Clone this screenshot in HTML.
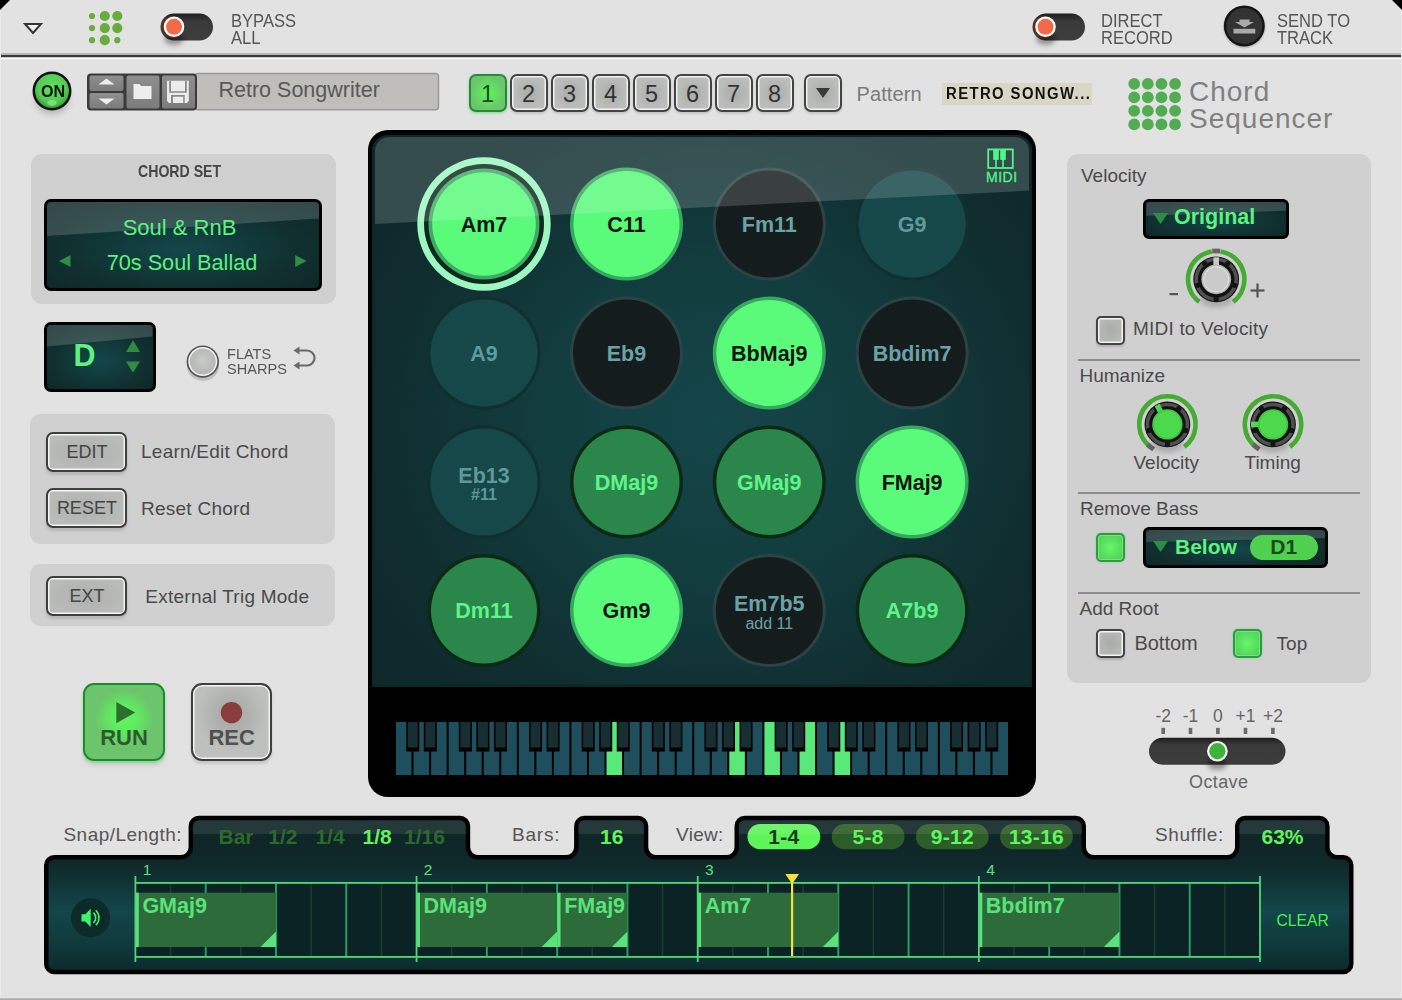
<!DOCTYPE html>
<html><head><meta charset="utf-8">
<style>
html,body{margin:0;padding:0;}
body{width:1402px;height:1000px;overflow:hidden;background:#e2e2e2;font-family:"Liberation Sans",sans-serif;}
#root{position:relative;width:1402px;height:1000px;overflow:hidden;background:#e2e2e2;}
.a{position:absolute;}
.t{position:absolute;white-space:nowrap;line-height:1;}
.din{transform-origin:0 0;}
.lcd{position:absolute;background:radial-gradient(ellipse at 50% 55%,#14474b 0%,#10302f 60%,#0f2526 100%);border:3px solid #000;border-radius:7px;box-sizing:border-box;overflow:hidden;}
.gl{position:absolute;left:0;top:0;right:0;background:rgba(255,255,255,0.16);}
.pbtn{position:absolute;width:38px;height:38px;box-sizing:border-box;border:2px solid #444;border-radius:7px;background:radial-gradient(circle at 50% 50%,#a9aca9 0%,#b9bcb9 60%,#bdbfbd 100%);box-shadow:inset 0 0 0 1.5px #f2f2f2, 0 2px 2px rgba(0,0,0,0.12);color:#333;font-size:23.5px;text-align:center;line-height:36px;}
.gbtn{position:absolute;box-sizing:border-box;border:2px solid #3f3f3f;border-radius:7px;background:radial-gradient(ellipse at 50% 50%,#adb0ad 0%,#b8bbb8 70%);box-shadow:inset 0 0 0 1.5px #f4f4f4, 0 3px 3px rgba(0,0,0,0.12);color:#444;text-align:center;}
.panel{position:absolute;background:#d0d0d0;border-radius:11px;}
.lbl{position:absolute;white-space:nowrap;line-height:1;color:#4a4a4a;font-size:19px;}
.chk{position:absolute;width:29px;height:29px;box-sizing:border-box;border:2px solid #444;border-radius:5px;background:radial-gradient(circle,#a9aca9 0%,#b7bab7 80%);box-shadow:inset 0 0 0 1.5px #f4f4f4,0 2px 2px rgba(0,0,0,0.15);}
.chk.on{border-color:#2f9a45;background:radial-gradient(circle,#67f56a 0%,#52d45a 80%);box-shadow:inset 0 0 0 1px #77e47a,0 0 2px rgba(60,200,80,0.5);}
.sep{position:absolute;left:1078px;width:282px;height:2px;background:#8c8c8c;}
.pad{position:absolute;border-radius:50%;box-sizing:border-box;text-align:center;font-weight:bold;}
</style></head>
<body><div id="root">
<!-- TOPBAR -->
<svg class="a" style="left:0;top:0" width="1402" height="60"><defs><linearGradient id="tg" x1="0" y1="0" x2="0" y2="1"><stop offset="0" stop-color="#1e1e1e"/><stop offset="0.3" stop-color="#3a3a3a"/><stop offset="1" stop-color="#3d3d3d"/></linearGradient><filter id="tsb" x="-50%" y="-50%" width="200%" height="200%"><feGaussianBlur stdDeviation="2.5"/></filter></defs>
<polygon points="0,0 10,0 0,10" fill="#000"/>
<polygon points="1392,0 1402,0 1402,10" fill="#000"/>
<polygon points="25,24 41,24 33,33" fill="#f0f0f0" stroke="#333" stroke-width="2" stroke-linejoin="miter"/>
<g fill="#6aab3e">
<circle cx="92" cy="16" r="3.1"/><circle cx="104.8" cy="16" r="5.1"/><circle cx="117.3" cy="16" r="5.1"/>
<circle cx="92" cy="28.1" r="3.1"/><circle cx="104.8" cy="28.1" r="5.1"/><circle cx="117.3" cy="28.1" r="5.1"/>
<circle cx="92" cy="40.2" r="3.1"/><circle cx="104.8" cy="40.2" r="5.1"/><circle cx="117.3" cy="40.2" r="3.1"/>
</g>
<!-- bypass toggle -->
<rect x="160.5" y="13.5" width="52.5" height="27" rx="13.5" fill="url(#tg)"/>

<ellipse cx="174" cy="39" rx="10" ry="6" fill="#000" opacity="0.35" filter="url(#tsb)"/>
<circle cx="173" cy="26.8" r="11" fill="#6a2a1a"/>
<circle cx="174" cy="26.8" r="10.3" fill="#fff"/>
<circle cx="174" cy="26.8" r="8" fill="#f46a48"/>
<!-- direct record toggle -->
<rect x="1032.5" y="13.5" width="52.5" height="27" rx="13.5" fill="url(#tg)"/>

<ellipse cx="1046" cy="39" rx="10" ry="6" fill="#000" opacity="0.35" filter="url(#tsb)"/>
<circle cx="1044.5" cy="26.8" r="11" fill="#6a2a1a"/>
<circle cx="1045.5" cy="26.8" r="10.3" fill="#fff"/>
<circle cx="1045.5" cy="26.8" r="8" fill="#f46a48"/>
<!-- send to track -->
<circle cx="1244.3" cy="27" r="21.5" fill="#000" opacity="0.12"/>
<circle cx="1244.3" cy="26" r="20.5" fill="#151515"/>
<circle cx="1244.3" cy="26" r="18" fill="#333"/>
<polygon points="1239.5,19.5 1249.5,19.5 1249.5,22 1254,22 1244.5,27.5 1235,22 1239.5,22" fill="#aaa"/>
<rect x="1233.5" y="28.8" width="21.8" height="4.7" fill="#aaa"/>
<!-- separator -->
<rect x="0" y="53" width="1402" height="2" fill="#9a9a9a" opacity="0.6"/>
<rect x="0" y="55" width="1402" height="2.5" fill="#3a3a3a"/>
<rect x="0" y="57.5" width="1402" height="1.5" fill="#fdfdfd"/>
</svg>
<div class="t din" style="left:230.5px;top:13.2px;font-size:18px;color:#555;transform:scaleX(0.92);line-height:17px;">BYPASS<br>ALL</div>
<div class="t din" style="left:1101px;top:13.2px;font-size:18px;color:#555;transform:scaleX(0.92);line-height:17px;">DIRECT<br>RECORD</div>
<div class="t din" style="left:1276.5px;top:13.2px;font-size:18px;color:#555;transform:scaleX(0.92);line-height:17px;">SEND TO<br>TRACK</div>
<!-- ROW2 -->
<svg class="a" style="left:0;top:60px" width="450" height="70">
<defs>
<radialGradient id="ong" cx="0.5" cy="0.4" r="0.6"><stop offset="0" stop-color="#5fe35f"/><stop offset="0.7" stop-color="#52cc52"/><stop offset="1" stop-color="#3a9a3a"/></radialGradient>
<linearGradient id="bg1" x1="0" y1="0" x2="0" y2="1"><stop offset="0" stop-color="#8e8e8e"/><stop offset="1" stop-color="#7c7c7c"/></linearGradient>
</defs>
<filter id="onb" x="-50%" y="-50%" width="200%" height="200%"><feGaussianBlur stdDeviation="3"/></filter><ellipse cx="52" cy="40" rx="17" ry="14" fill="#000" opacity="0.2" filter="url(#onb)"/>
<circle cx="52" cy="31" r="19.5" fill="#111"/>
<circle cx="52" cy="31" r="17" fill="url(#ong)"/>
<ellipse cx="52" cy="43" rx="5" ry="3" fill="#9af09a" opacity="0.6"/>
<!-- buttons group -->
<rect x="195" y="13.5" width="243.5" height="36.3" rx="3" fill="#c0bebb" stroke="#9a9a9a" stroke-width="1.5"/>
<rect x="87" y="13.5" width="110" height="37" rx="4" fill="#3a3a3a"/>
<rect x="89.5" y="15.5" width="34" height="15.5" rx="2" fill="url(#bg1)"/>
<rect x="89.5" y="33" width="34" height="15.5" rx="2" fill="url(#bg1)"/>
<rect x="126.5" y="15.5" width="33" height="33" rx="2" fill="url(#bg1)"/>
<rect x="162" y="15.5" width="33" height="33" rx="2" fill="url(#bg1)"/>
<polygon points="98.5,24.5 106.5,18.5 114.5,24.5" fill="#eee"/>
<polygon points="98.5,38.5 106.5,44.5 114.5,38.5" fill="#eee"/>
<path d="M133.5 26 L133.5 24 L139.5 24 L141 26 L151.5 26 L151.5 39 L133.5 39 Z" fill="#eee"/>
<path d="M167 20.8 H188.8 V41 L186.9 42.9 H168.9 L167 41 Z" fill="#ececec"/><path d="M169.2 20.8 H171 V31.2 H185 V20.8 H186.8 V32.7 H169.2 Z M171 42.9 V35 H184.7 V42.9 H183.2 V36.8 H173 V42.9 Z" fill="#8a8a8a"/>
</svg>
<div class="t" style="left:40.5px;top:82.8px;font-size:17px;font-weight:bold;color:#111;transform:scaleX(0.95);transform-origin:0 0;">ON</div>
<div class="t" style="left:218.5px;top:80.3px;font-size:21.5px;color:#585858;">Retro Songwriter</div>
<div class="pbtn" style="left:468.5px;top:73.5px;border-color:#278a35;background:radial-gradient(circle at 50% 50%,#5df55d 0%,#62df62 35%,#6cc46c 70%,#6cc46c 100%);box-shadow:0 1px 3px rgba(60,210,80,0.6);color:#1f4a1f;">1</div>
<div class="pbtn" style="left:509.5px;top:73.5px;">2</div>
<div class="pbtn" style="left:550.5px;top:73.5px;">3</div>
<div class="pbtn" style="left:591.5px;top:73.5px;">4</div>
<div class="pbtn" style="left:632.5px;top:73.5px;">5</div>
<div class="pbtn" style="left:673.5px;top:73.5px;">6</div>
<div class="pbtn" style="left:714.5px;top:73.5px;">7</div>
<div class="pbtn" style="left:755.5px;top:73.5px;">8</div>
<div class="pbtn" style="left:803.5px;top:73.5px;"><svg width="34" height="34" style="position:absolute;left:0;top:0"><polygon points="10,12 24,12 17,22" fill="#3a3a3a"/></svg></div>
<div class="t" style="left:856.5px;top:83.6px;font-size:20px;color:#7a7a7a;letter-spacing:0.1px;">Pattern</div>
<div class="a" style="left:942px;top:82.5px;width:150px;height:22.5px;background:#d9d6c6;"></div>
<div class="t" style="left:946px;top:86.2px;font-size:16px;font-weight:bold;color:#111;letter-spacing:1.5px;transform:scaleX(0.93);transform-origin:0 0;">RETRO SONGW...</div>
<svg class="a" style="left:1120px;top:70px" width="70" height="70"><g fill="#52ad52"><circle cx="14.20" cy="13.90" r="5.9"/><circle cx="27.83" cy="13.90" r="5.9"/><circle cx="41.46" cy="13.90" r="5.9"/><circle cx="55.09" cy="13.90" r="5.9"/><circle cx="14.20" cy="27.40" r="5.9"/><circle cx="27.83" cy="27.40" r="5.9"/><circle cx="41.46" cy="27.40" r="5.9"/><circle cx="55.09" cy="27.40" r="5.9"/><circle cx="14.20" cy="40.90" r="5.9"/><circle cx="27.83" cy="40.90" r="5.9"/><circle cx="41.46" cy="40.90" r="5.9"/><circle cx="55.09" cy="40.90" r="5.9"/><circle cx="14.20" cy="54.40" r="5.9"/><circle cx="27.83" cy="54.40" r="5.9"/><circle cx="41.46" cy="54.40" r="5.9"/><circle cx="55.09" cy="54.40" r="5.9"/></g></svg>
<div class="t" style="left:1189px;top:77.5px;font-size:28px;color:#808080;line-height:27.6px;letter-spacing:1px;">Chord<br>Sequencer</div>
<div class="a" style="left:0;top:997.5px;width:1402px;height:2.5px;background:linear-gradient(#c8c8c8,#a0a0a0);"></div>
<div class="a" style="left:0;top:10px;width:1px;height:987px;background:#ebebeb;"></div><div class="a" style="left:1401px;top:10px;width:1px;height:987px;background:#ebebeb;"></div>
<!-- LEFT -->
<div class="panel" style="left:30.5px;top:153.5px;width:305px;height:150px;"></div>
<div class="t din" style="left:138.3px;top:162.8px;font-size:17px;font-weight:bold;color:#464646;transform:scaleX(0.83);">CHORD SET</div>
<div class="lcd" style="left:44px;top:198.5px;width:278px;height:92px;"><div class="gl" style="height:40px;clip-path:polygon(0 0,100% 0,100% 17px,0 34.5px);"></div></div>
<div class="t" style="left:0;width:359px;text-align:center;top:217px;font-size:22px;color:#5ef27e;">Soul &amp; RnB</div>
<div class="t" style="left:0;width:364px;text-align:center;top:251.8px;font-size:21.7px;color:#5ef27e;">70s Soul Ballad</div>
<svg class="a" style="left:40px;top:240px" width="290" height="40">
<polygon points="19,21 30.5,15 30.5,27" fill="#2e8d44"/>
<polygon points="255.2,15 266.5,21 255.2,27" fill="#2e8d44"/>
</svg>
<div class="lcd" style="left:44px;top:321.5px;width:111.5px;height:70.5px;"><div class="gl" style="height:30px;clip-path:polygon(0 0,100% 0,100% 12px,0 22px);"></div></div>
<div class="t" style="left:73.5px;top:340.3px;font-size:30.5px;font-weight:bold;color:#5ef27e;">D</div>
<svg class="a" style="left:120px;top:335px" width="30" height="45">
<polygon points="6,17 13,5.3 20,17" fill="#2e8d44"/>
<polygon points="6,26.6 20,26.6 13,37.8" fill="#2e8d44"/>
</svg>
<svg class="a" style="left:180px;top:340px" width="145" height="45">
<defs><radialGradient id="fsg" cx="0.5" cy="0.45" r="0.55"><stop offset="0" stop-color="#c9cac9"/><stop offset="1" stop-color="#b4b6b4"/></radialGradient></defs>
<ellipse cx="23" cy="26" rx="16" ry="15" fill="#000" opacity="0.15"/>
<circle cx="22.8" cy="21.6" r="16.2" fill="#555"/>
<circle cx="22.8" cy="21.6" r="14.5" fill="#f3f3f3"/>
<circle cx="22.8" cy="21.6" r="13" fill="url(#fsg)"/>
<path d="M118 10.5 L127 10.5 A7.5 7.5 0 0 1 127 25.5 L118 25.5" fill="none" stroke="#6a6a6a" stroke-width="2.2"/>
<polygon points="113.5,10.5 119.5,6.5 119.5,14.5" fill="#6a6a6a"/>
<polygon points="113.5,25.5 119.5,21.5 119.5,29.5" fill="#6a6a6a"/>
</svg>
<div class="t din" style="left:227.3px;top:345.8px;font-size:15px;color:#555;transform:scaleX(0.97);line-height:15.5px;">FLATS<br>SHARPS</div>
<div class="panel" style="left:30px;top:413.7px;width:305px;height:130.3px;"></div>
<div class="gbtn" style="left:46.4px;top:431.7px;width:81px;height:40px;font-size:18px;line-height:37px;">EDIT</div>
<div class="gbtn" style="left:46.4px;top:488.3px;width:81px;height:40px;font-size:18px;line-height:37px;">RESET</div>
<div class="lbl" style="left:141px;top:442.2px;letter-spacing:0.25px;">Learn/Edit Chord</div>
<div class="lbl" style="left:141px;top:499.1px;letter-spacing:0.25px;">Reset Chord</div>
<div class="panel" style="left:30px;top:563.9px;width:305px;height:62.4px;"></div>
<div class="gbtn" style="left:46.4px;top:576.4px;width:81px;height:40px;font-size:18px;line-height:37px;">EXT</div>
<div class="lbl" style="left:145.3px;top:586.7px;letter-spacing:0.25px;">External Trig Mode</div>
<div class="gbtn" style="left:83.3px;top:683.2px;width:81.4px;height:77.5px;border-radius:11px;border-color:#1f8a30;background:radial-gradient(circle at 50% 45%,#5ef55e 0%,#60ec60 22%,#6cc46c 52%,#6cc46c 100%);box-shadow:0 2px 2px rgba(80,220,90,0.5),0 5px 4px rgba(0,0,0,0.08);"></div>
<svg class="a" style="left:83px;top:683px" width="82" height="78"><polygon points="33.3,18.9 52.2,29.6 33.3,40.3" fill="#2e6e2e"/></svg>
<div class="t" style="left:83.3px;width:81.4px;text-align:center;top:726.6px;font-size:22px;font-weight:bold;color:#2b5b2b;">RUN</div>
<div class="gbtn" style="left:190.9px;top:683.2px;width:81.6px;height:77.5px;border-radius:11px;background:radial-gradient(circle at 50% 40%,#a6a8a6 0%,#b0b2b0 30%,#bdc0bd 60%,#bdc0bd 100%);"></div>
<svg class="a" style="left:190px;top:683px" width="82" height="78"><circle cx="41.5" cy="29.6" r="10.7" fill="#8a3d3d"/></svg>
<div class="t" style="left:190.9px;width:81.6px;text-align:center;top:726.6px;font-size:22px;font-weight:bold;color:#505050;">REC</div>
<!-- PADS -->
<div class="a" style="left:368px;top:129.5px;width:667.5px;height:667px;background:#000;border-radius:20px;"></div>
<div class="a" style="left:372px;top:134.5px;width:659.6px;height:552px;border-radius:16px 16px 0 0;background:radial-gradient(ellipse 60% 65% at 52% 52%,#15464a 0%,#123c3e 45%,#102d2f 85%,#0f2a2c 100%);box-shadow:inset 0 0 0 2.5px #0f2526;"></div>
<svg class="a" style="left:0;top:0" width="1402" height="800">
<circle cx="484" cy="224" r="66.7" fill="#9cf7c1"/>
<circle cx="484" cy="224" r="60" fill="#0e2a1d"/>
<circle cx="484" cy="224" r="55.5" fill="#3eaa66"/>
<circle cx="484" cy="224" r="51.8" fill="#5afb7a"/>
<circle cx="626.5" cy="224" r="56.5" fill="#35a95d"/>
<circle cx="626.5" cy="224" r="53" fill="#5afb7a"/>
<circle cx="769.3" cy="224" r="56.5" fill="#2c4244"/>
<circle cx="769.3" cy="224" r="53.5" fill="#151c1e"/>
<circle cx="912.1" cy="224" r="56.5" fill="#10302f"/>
<circle cx="912.1" cy="224" r="53.5" fill="#164749"/>
<circle cx="484" cy="353" r="56.5" fill="#10302f"/>
<circle cx="484" cy="353" r="53.5" fill="#164749"/>
<circle cx="626.5" cy="353" r="56.5" fill="#2c4244"/>
<circle cx="626.5" cy="353" r="53.5" fill="#151c1e"/>
<circle cx="769.3" cy="353" r="56.5" fill="#35a95d"/>
<circle cx="769.3" cy="353" r="53" fill="#5afb7a"/>
<circle cx="912.1" cy="353" r="56.5" fill="#2c4244"/>
<circle cx="912.1" cy="353" r="53.5" fill="#151c1e"/>
<circle cx="484" cy="482" r="56.5" fill="#10302f"/>
<circle cx="484" cy="482" r="53.5" fill="#164749"/>
<circle cx="626.5" cy="482" r="56.5" fill="#0b2a16"/>
<circle cx="626.5" cy="482" r="53" fill="#2b864b"/>
<circle cx="769.3" cy="482" r="56.5" fill="#0b2a16"/>
<circle cx="769.3" cy="482" r="53" fill="#2b864b"/>
<circle cx="912.1" cy="482" r="56.5" fill="#35a95d"/>
<circle cx="912.1" cy="482" r="53" fill="#5afb7a"/>
<circle cx="484" cy="610.5" r="56.5" fill="#0b2a16"/>
<circle cx="484" cy="610.5" r="53" fill="#2b864b"/>
<circle cx="626.5" cy="610.5" r="56.5" fill="#35a95d"/>
<circle cx="626.5" cy="610.5" r="53" fill="#5afb7a"/>
<circle cx="769.3" cy="610.5" r="56.5" fill="#2c4244"/>
<circle cx="769.3" cy="610.5" r="53.5" fill="#151c1e"/>
<circle cx="912.1" cy="610.5" r="56.5" fill="#0b2a16"/>
<circle cx="912.1" cy="610.5" r="53" fill="#2b864b"/>
</svg>
<div class="t" style="left:414px;width:140px;text-align:center;top:214.8px;font-size:21.5px;font-weight:bold;color:#151515;">Am7</div>
<div class="t" style="left:556.5px;width:140px;text-align:center;top:214.8px;font-size:21.5px;font-weight:bold;color:#151515;">C11</div>
<div class="t" style="left:699.3px;width:140px;text-align:center;top:214.8px;font-size:21.5px;font-weight:bold;color:#6aa3a5;">Fm11</div>
<div class="t" style="left:842.1px;width:140px;text-align:center;top:214.8px;font-size:21.5px;font-weight:bold;color:#5f9a9b;">G9</div>
<div class="t" style="left:414px;width:140px;text-align:center;top:343.8px;font-size:21.5px;font-weight:bold;color:#5f9a9b;">A9</div>
<div class="t" style="left:556.5px;width:140px;text-align:center;top:343.8px;font-size:21.5px;font-weight:bold;color:#6aa3a5;">Eb9</div>
<div class="t" style="left:699.3px;width:140px;text-align:center;top:343.8px;font-size:21.5px;font-weight:bold;color:#151515;">BbMaj9</div>
<div class="t" style="left:842.1px;width:140px;text-align:center;top:343.8px;font-size:21.5px;font-weight:bold;color:#6aa3a5;">Bbdim7</div>
<div class="t" style="left:414px;width:140px;text-align:center;top:465.8px;font-size:21.5px;font-weight:bold;color:#5f9a9b;">Eb13</div>
<div class="t" style="left:414px;width:140px;text-align:center;top:487.0px;font-size:16px;font-weight:bold;color:#5f9a9b;">#11</div>
<div class="t" style="left:556.5px;width:140px;text-align:center;top:472.8px;font-size:21.5px;font-weight:bold;color:#5ef58a;">DMaj9</div>
<div class="t" style="left:699.3px;width:140px;text-align:center;top:472.8px;font-size:21.5px;font-weight:bold;color:#5ef58a;">GMaj9</div>
<div class="t" style="left:842.1px;width:140px;text-align:center;top:472.8px;font-size:21.5px;font-weight:bold;color:#151515;">FMaj9</div>
<div class="t" style="left:414px;width:140px;text-align:center;top:601.3px;font-size:21.5px;font-weight:bold;color:#5ef58a;">Dm11</div>
<div class="t" style="left:556.5px;width:140px;text-align:center;top:601.3px;font-size:21.5px;font-weight:bold;color:#151515;">Gm9</div>
<div class="t" style="left:699.3px;width:140px;text-align:center;top:594.3px;font-size:21.5px;font-weight:bold;color:#6aa3a5;">Em7b5</div>
<div class="t" style="left:699.3px;width:140px;text-align:center;top:615.5px;font-size:16px;font-weight:normal;color:#6aa3a5;">add 11</div>
<div class="t" style="left:842.1px;width:140px;text-align:center;top:601.3px;font-size:21.5px;font-weight:bold;color:#5ef58a;">A7b9</div>
<div class="a" style="left:374.5px;top:137px;width:654.6px;height:90px;border-radius:14px 14px 0 0;background:rgba(255,255,255,0.16);clip-path:polygon(0 0,100% 0,100% 53.6px,0 87px);"></div>
<svg class="a" style="left:980px;top:140px" width="40" height="50"><rect x="8.2" y="9.4" width="24.6" height="18.6" fill="none" stroke="#4ff58a" stroke-width="1.8"/><rect x="13.2" y="9.4" width="5.6" height="10.5" fill="#4ff58a"/><rect x="20.2" y="9.4" width="5.6" height="10.5" fill="#4ff58a"/><rect x="15.2" y="19" width="1.6" height="9" fill="#4ff58a"/><rect x="22.2" y="19" width="1.6" height="9" fill="#4ff58a"/></svg>
<div class="t" style="left:986px;top:170px;font-size:14px;color:#4ff58a;letter-spacing:0.5px;-webkit-text-stroke:0.3px #4ff58a;">MIDI</div>
<svg class="a" style="left:0;top:700px" width="1402" height="90">
<rect x="396.00" y="22" width="15.54" height="53" fill="#1f4f5c"/>
<rect x="413.54" y="22" width="15.54" height="53" fill="#1f4f5c"/>
<rect x="431.09" y="22" width="15.54" height="53" fill="#1f4f5c"/>
<rect x="448.63" y="22" width="15.54" height="53" fill="#1f4f5c"/>
<rect x="466.17" y="22" width="15.54" height="53" fill="#1f4f5c"/>
<rect x="483.71" y="22" width="15.54" height="53" fill="#1f4f5c"/>
<rect x="501.26" y="22" width="15.54" height="53" fill="#1f4f5c"/>
<rect x="518.80" y="22" width="15.54" height="53" fill="#1f4f5c"/>
<rect x="536.34" y="22" width="15.54" height="53" fill="#1f4f5c"/>
<rect x="553.89" y="22" width="15.54" height="53" fill="#1f4f5c"/>
<rect x="571.43" y="22" width="15.54" height="53" fill="#1f4f5c"/>
<rect x="588.97" y="22" width="15.54" height="53" fill="#1f4f5c"/>
<rect x="606.51" y="22" width="15.54" height="53" fill="#5ae87a"/>
<rect x="624.06" y="22" width="15.54" height="53" fill="#1f4f5c"/>
<rect x="641.60" y="22" width="15.54" height="53" fill="#1f4f5c"/>
<rect x="659.14" y="22" width="15.54" height="53" fill="#1f4f5c"/>
<rect x="676.69" y="22" width="15.54" height="53" fill="#1f4f5c"/>
<rect x="694.23" y="22" width="15.54" height="53" fill="#1f4f5c"/>
<rect x="711.77" y="22" width="15.54" height="53" fill="#1f4f5c"/>
<rect x="729.31" y="22" width="15.54" height="53" fill="#5ae87a"/>
<rect x="746.86" y="22" width="15.54" height="53" fill="#1f4f5c"/>
<rect x="764.40" y="22" width="15.54" height="53" fill="#5ae87a"/>
<rect x="781.94" y="22" width="15.54" height="53" fill="#1f4f5c"/>
<rect x="799.49" y="22" width="15.54" height="53" fill="#5ae87a"/>
<rect x="817.03" y="22" width="15.54" height="53" fill="#1f4f5c"/>
<rect x="834.57" y="22" width="15.54" height="53" fill="#5ae87a"/>
<rect x="852.11" y="22" width="15.54" height="53" fill="#1f4f5c"/>
<rect x="869.66" y="22" width="15.54" height="53" fill="#1f4f5c"/>
<rect x="887.20" y="22" width="15.54" height="53" fill="#1f4f5c"/>
<rect x="904.74" y="22" width="15.54" height="53" fill="#1f4f5c"/>
<rect x="922.29" y="22" width="15.54" height="53" fill="#1f4f5c"/>
<rect x="939.83" y="22" width="15.54" height="53" fill="#1f4f5c"/>
<rect x="957.37" y="22" width="15.54" height="53" fill="#1f4f5c"/>
<rect x="974.91" y="22" width="15.54" height="53" fill="#1f4f5c"/>
<rect x="992.46" y="22" width="15.54" height="53" fill="#1f4f5c"/>
<rect x="406.24" y="22" width="13" height="29.5" fill="#000"/>
<rect x="407.74" y="22" width="10" height="25.6" fill="#172e33"/>
<rect x="423.79" y="22" width="13" height="29.5" fill="#000"/>
<rect x="425.29" y="22" width="10" height="25.6" fill="#172e33"/>
<rect x="458.87" y="22" width="13" height="29.5" fill="#000"/>
<rect x="460.37" y="22" width="10" height="25.6" fill="#172e33"/>
<rect x="476.41" y="22" width="13" height="29.5" fill="#000"/>
<rect x="477.91" y="22" width="10" height="25.6" fill="#172e33"/>
<rect x="493.96" y="22" width="13" height="29.5" fill="#000"/>
<rect x="495.46" y="22" width="10" height="25.6" fill="#172e33"/>
<rect x="529.04" y="22" width="13" height="29.5" fill="#000"/>
<rect x="530.54" y="22" width="10" height="25.6" fill="#172e33"/>
<rect x="546.59" y="22" width="13" height="29.5" fill="#000"/>
<rect x="548.09" y="22" width="10" height="25.6" fill="#172e33"/>
<rect x="581.67" y="22" width="13" height="29.5" fill="#000"/>
<rect x="583.17" y="22" width="10" height="25.6" fill="#172e33"/>
<rect x="599.21" y="22" width="13" height="29.5" fill="#000"/>
<rect x="600.71" y="22" width="10" height="25.6" fill="#172e33"/>
<rect x="616.76" y="22" width="13" height="29.5" fill="#000"/>
<rect x="618.26" y="22" width="10" height="25.6" fill="#172e33"/>
<rect x="651.84" y="22" width="13" height="29.5" fill="#000"/>
<rect x="653.34" y="22" width="10" height="25.6" fill="#172e33"/>
<rect x="669.39" y="22" width="13" height="29.5" fill="#000"/>
<rect x="670.89" y="22" width="10" height="25.6" fill="#172e33"/>
<rect x="704.47" y="22" width="13" height="29.5" fill="#000"/>
<rect x="705.97" y="22" width="10" height="25.6" fill="#172e33"/>
<rect x="722.01" y="22" width="13" height="29.5" fill="#000"/>
<rect x="723.51" y="22" width="10" height="25.6" fill="#172e33"/>
<rect x="739.56" y="22" width="13" height="29.5" fill="#000"/>
<rect x="741.06" y="22" width="10" height="25.6" fill="#172e33"/>
<rect x="774.64" y="22" width="13" height="29.5" fill="#000"/>
<rect x="776.14" y="22" width="10" height="25.6" fill="#172e33"/>
<rect x="792.19" y="22" width="13" height="29.5" fill="#000"/>
<rect x="793.69" y="22" width="10" height="25.6" fill="#172e33"/>
<rect x="827.27" y="22" width="13" height="29.5" fill="#000"/>
<rect x="828.77" y="22" width="10" height="25.6" fill="#172e33"/>
<rect x="844.81" y="22" width="13" height="29.5" fill="#000"/>
<rect x="846.31" y="22" width="10" height="25.6" fill="#172e33"/>
<rect x="862.36" y="22" width="13" height="29.5" fill="#000"/>
<rect x="863.86" y="22" width="10" height="25.6" fill="#172e33"/>
<rect x="897.44" y="22" width="13" height="29.5" fill="#000"/>
<rect x="898.94" y="22" width="10" height="25.6" fill="#172e33"/>
<rect x="914.99" y="22" width="13" height="29.5" fill="#000"/>
<rect x="916.49" y="22" width="10" height="25.6" fill="#172e33"/>
<rect x="950.07" y="22" width="13" height="29.5" fill="#000"/>
<rect x="951.57" y="22" width="10" height="25.6" fill="#172e33"/>
<rect x="967.61" y="22" width="13" height="29.5" fill="#000"/>
<rect x="969.11" y="22" width="10" height="25.6" fill="#172e33"/>
<rect x="985.16" y="22" width="13" height="29.5" fill="#000"/>
<rect x="986.66" y="22" width="10" height="25.6" fill="#172e33"/>
</svg>
<!-- RIGHT -->
<div class="panel" style="left:1067px;top:153.75px;width:304.25px;height:528.75px;border-radius:11px;"></div>
<div class="lbl" style="left:1081px;top:166.4px;font-size:19px;">Velocity</div>
<div class="lcd" style="left:1143.25px;top:198.75px;width:146px;height:40px;border-radius:6px;"><div class="gl" style="height:20px;clip-path:polygon(0 0,100% 0,100% 9px,0 14px);"></div></div>
<svg class="a" style="left:1140px;top:200px" width="40" height="40"><polygon points="13,13 28,13 20.5,24" fill="#2e8d44"/></svg>
<div class="t" style="left:1174px;top:207.1px;font-size:21.5px;font-weight:bold;color:#5ef27e;">Original</div>
<svg class="a" style="left:1060px;top:150px" width="320" height="650"><defs><filter id="blr" x="-50%" y="-50%" width="200%" height="200%"><feGaussianBlur stdDeviation="2.5"/></filter><linearGradient id="og" x1="0" y1="0" x2="0" y2="1"><stop offset="0" stop-color="#1c1c1c"/><stop offset="0.25" stop-color="#3a3a3a"/><stop offset="1" stop-color="#3c3c3c"/></linearGradient></defs>
<g transform="translate(-1060,-150)">
<path d="M1199.23 301.82 A28.2 28.2 0 0 1 1211.79 251.45" fill="none" stroke="#45ab32" stroke-width="4.6"/>
<path d="M1220.61 251.45 A28.2 28.2 0 0 1 1233.17 301.82" fill="none" stroke="#45ab32" stroke-width="4.6"/>
<rect x="1212.2" y="248.60000000000002" width="8" height="4.8" fill="#666"/>
<ellipse cx="1216.2" cy="299.3" rx="16" ry="8" fill="#000" opacity="0.18" filter="url(#blr)"/>
<circle cx="1216.2" cy="279.3" r="22.9" fill="#111"/>
<circle cx="1216.2" cy="279.3" r="20" fill="none" stroke="#505050" stroke-width="3.5"/>
<circle cx="1227.66" cy="263.52" r="2.6" fill="#141414"/>
<circle cx="1234.75" cy="285.33" r="2.6" fill="#141414"/>
<circle cx="1216.20" cy="298.80" r="2.6" fill="#141414"/>
<circle cx="1197.65" cy="285.33" r="2.6" fill="#141414"/>
<circle cx="1204.74" cy="263.52" r="2.6" fill="#141414"/>
<rect x="1213.4" y="257.3" width="5.6" height="10" fill="#c8c8c8"/>
<circle cx="1216.2" cy="279.3" r="14.9" fill="#b4b4b4"/>
<circle cx="1216.2" cy="279.3" r="13.2" fill="#dcdcdc"/>
<circle cx="1216.2" cy="279.3" r="11.8" fill="#cacaca"/>
<path d="M1150.43 446.92 A28.2 28.2 0 1 1 1184.37 446.92" fill="none" stroke="#45ab32" stroke-width="4.6"/>
<rect x="-4" y="-2.4" width="8" height="4.8" fill="#666" transform="translate(1150.43,446.92) rotate(37)"/>
<ellipse cx="1167.4" cy="444.4" rx="16" ry="8" fill="#000" opacity="0.18" filter="url(#blr)"/>
<circle cx="1167.4" cy="424.4" r="22.9" fill="#111"/>
<circle cx="1167.4" cy="424.4" r="20" fill="none" stroke="#505050" stroke-width="3.5"/>
<circle cx="1178.86" cy="408.62" r="2.6" fill="#141414"/>
<circle cx="1185.95" cy="430.43" r="2.6" fill="#141414"/>
<circle cx="1167.40" cy="443.90" r="2.6" fill="#141414"/>
<circle cx="1148.85" cy="430.43" r="2.6" fill="#141414"/>
<circle cx="1155.94" cy="408.62" r="2.6" fill="#141414"/>
<rect x="-2.8" y="-22" width="5.6" height="10" fill="#4cd94c" transform="translate(1167.4,424.4) rotate(-28)"/>
<circle cx="1167.4" cy="424.4" r="15.2" fill="#46c646"/>
<circle cx="1167.4" cy="424.4" r="13.3" fill="#4cd94c"/>
<path d="M1256.03 446.92 A28.2 28.2 0 1 1 1289.97 446.92" fill="none" stroke="#45ab32" stroke-width="4.6"/>
<rect x="-4" y="-2.4" width="8" height="4.8" fill="#666" transform="translate(1256.03,446.92) rotate(37)"/>
<ellipse cx="1273" cy="444.4" rx="16" ry="8" fill="#000" opacity="0.18" filter="url(#blr)"/>
<circle cx="1273" cy="424.4" r="22.9" fill="#111"/>
<circle cx="1273" cy="424.4" r="20" fill="none" stroke="#505050" stroke-width="3.5"/>
<circle cx="1284.46" cy="408.62" r="2.6" fill="#141414"/>
<circle cx="1291.55" cy="430.43" r="2.6" fill="#141414"/>
<circle cx="1273.00" cy="443.90" r="2.6" fill="#141414"/>
<circle cx="1254.45" cy="430.43" r="2.6" fill="#141414"/>
<circle cx="1261.54" cy="408.62" r="2.6" fill="#141414"/>
<rect x="-2.8" y="-22" width="5.6" height="10" fill="#4cd94c" transform="translate(1273,424.4) rotate(-90)"/>
<circle cx="1273" cy="424.4" r="15.2" fill="#46c646"/>
<circle cx="1273" cy="424.4" r="13.3" fill="#4cd94c"/>
<rect x="1169.5" y="293" width="8.5" height="2.2" fill="#555"/>
<rect x="1250.5" y="289.4" width="14" height="2.2" fill="#555"/><rect x="1256.4" y="283.5" width="2.2" height="14" fill="#555"/>
<rect x="1161.4" y="727.8" width="3.6" height="6.2" fill="#6a6a6a"/>
<rect x="1188.7" y="727.8" width="3.6" height="6.2" fill="#6a6a6a"/>
<rect x="1216.1" y="727.8" width="3.6" height="6.2" fill="#6a6a6a"/>
<rect x="1243.7" y="727.8" width="3.6" height="6.2" fill="#6a6a6a"/>
<rect x="1271.1" y="727.8" width="3.6" height="6.2" fill="#6a6a6a"/>
<rect x="1149" y="737.8" width="136.5" height="27" rx="13.5" fill="url(#og)"/>
<ellipse cx="1217.4" cy="764" rx="10" ry="6" fill="#000" opacity="0.35" filter="url(#blr)"/>
<circle cx="1217.4" cy="751.3" r="10.3" fill="#fff"/><circle cx="1217.4" cy="751.3" r="8.2" fill="#3cb43c"/>
</g></svg>
<div class="chk" style="left:1096.25px;top:315.75px;"></div>
<div class="lbl" style="left:1133px;top:319.4px;font-size:19px;letter-spacing:0.2px;">MIDI to Velocity</div>
<div class="sep" style="top:358.5px;"></div>
<div class="lbl" style="left:1079.5px;top:365.9px;font-size:19px;">Humanize</div>
<div class="lbl" style="left:1133.5px;top:452.5px;font-size:19px;">Velocity</div>
<div class="lbl" style="left:1244.5px;top:452.5px;font-size:19px;">Timing</div>
<div class="sep" style="top:491.6px;"></div>
<div class="lbl" style="left:1080px;top:499.3px;font-size:19px;">Remove Bass</div>
<div class="chk on" style="left:1096px;top:533.1px;"></div>
<div class="lcd" style="left:1143.1px;top:527.1px;width:185.4px;height:40.5px;border-radius:6px;"><div class="gl" style="height:20px;clip-path:polygon(0 0,100% 0,100% 8px,0 12px);"></div></div>
<svg class="a" style="left:1140px;top:530px" width="40" height="40"><polygon points="13,11 28,11 20.5,22" fill="#2e8d44"/></svg>
<div class="t" style="left:1175px;top:536.2px;font-size:21px;font-weight:bold;color:#5ef27e;">Below</div>
<div class="a" style="left:1249.6px;top:535px;width:68.4px;height:25px;border-radius:12.5px;background:#4fd04f;"></div>
<div class="t" style="left:1249.6px;width:68.4px;text-align:center;top:536.0px;font-size:21px;font-weight:bold;color:#1e4a1e;">D1</div>
<div class="sep" style="top:591.5px;"></div>
<div class="lbl" style="left:1079.5px;top:598.9px;font-size:19px;">Add Root</div>
<div class="chk" style="left:1096px;top:628.5px;"></div>
<div class="lbl" style="left:1134.4px;top:632.9px;font-size:20px;">Bottom</div>
<div class="chk on" style="left:1233px;top:628.5px;"></div>
<div class="lbl" style="left:1276.6px;top:633.7px;font-size:19px;">Top</div>
<div class="t" style="left:1143.2px;width:40px;text-align:center;top:707.7px;font-size:17.5px;color:#666;">-2</div>
<div class="t" style="left:1170.5px;width:40px;text-align:center;top:707.7px;font-size:17.5px;color:#666;">-1</div>
<div class="t" style="left:1197.9px;width:40px;text-align:center;top:707.7px;font-size:17.5px;color:#666;">0</div>
<div class="t" style="left:1225.5px;width:40px;text-align:center;top:707.7px;font-size:17.5px;color:#666;">+1</div>
<div class="t" style="left:1252.9px;width:40px;text-align:center;top:707.7px;font-size:17.5px;color:#666;">+2</div>
<div class="lbl" style="left:1189px;top:773.2px;font-size:18px;color:#666;letter-spacing:0.4px;">Octave</div>
<!-- SEQ -->
<svg class="a" style="left:0;top:800px" width="1402" height="200">
<defs><linearGradient id="sqg" x1="0" y1="816" x2="0" y2="974" gradientUnits="userSpaceOnUse"><stop offset="0" stop-color="#0f2526"/><stop offset="0.3" stop-color="#0f2829"/><stop offset="0.6" stop-color="#134649"/><stop offset="0.8" stop-color="#103a3c"/><stop offset="1" stop-color="#0b2a2b"/></linearGradient></defs>
<g transform="translate(0,-800)">
<path d="M46.25 865.25 A8 8 0 0 1 54.25 857.25 H180.85 A10 10 0 0 0 190.85 847.25 V826.05 A8 8 0 0 1 198.85 818.05 H459.95 A8 8 0 0 1 467.95 826.05 V847.25 A10 10 0 0 0 477.95 857.25 H566.35 A10 10 0 0 0 576.35 847.25 V826.05 A8 8 0 0 1 584.35 818.05 H638.05 A8 8 0 0 1 646.05 826.05 V847.25 A10 10 0 0 0 656.05 857.25 H726.75 A10 10 0 0 0 736.75 847.25 V826.05 A8 8 0 0 1 744.75 818.05 H1075.75 A8 8 0 0 1 1083.75 826.05 V847.25 A10 10 0 0 0 1093.75 857.25 H1227.25 A10 10 0 0 0 1237.25 847.25 V826.05 A8 8 0 0 1 1245.25 818.05 H1319.35 A8 8 0 0 1 1327.35 826.05 V847.25 A10 10 0 0 0 1337.35 857.25 H1343.25 A8 8 0 0 1 1351.25 865.25 V964.05 A8 8 0 0 1 1343.25 972.05 H54.25 A8 8 0 0 1 46.25 964.05 Z" fill="url(#sqg)" stroke="#000" stroke-width="4.5"/>
<rect x="747.5" y="824.1" width="72.8" height="25.2" rx="12.6" fill="#5ef55a"/>
<rect x="831.7" y="824.1" width="72.8" height="25.2" rx="12.6" fill="#2c5d29"/>
<rect x="915.9" y="824.1" width="72.8" height="25.2" rx="12.6" fill="#2c5d29"/>
<rect x="1000.1" y="824.1" width="72.8" height="25.2" rx="12.6" fill="#2c5d29"/>
<path d="M192.6 834 V826.3 A6 6 0 0 1 198.6 820.3 H460.2 A6 6 0 0 1 466.2 826.3 V834 Z" fill="#ffffff" opacity="0.09"/>
<path d="M578.1 834 V826.3 A6 6 0 0 1 584.1 820.3 H638.3 A6 6 0 0 1 644.3 826.3 V834 Z" fill="#ffffff" opacity="0.09"/>
<path d="M738.5 834 V826.3 A6 6 0 0 1 744.5 820.3 H1076 A6 6 0 0 1 1082 826.3 V834 Z" fill="#ffffff" opacity="0.09"/>
<path d="M1239 834 V826.3 A6 6 0 0 1 1245 820.3 H1319.6 A6 6 0 0 1 1325.6 826.3 V834 Z" fill="#ffffff" opacity="0.09"/>
<rect x="135.4" y="883.6" width="1124.6" height="72.6" fill="#0b2324"/>
<rect x="169.79" y="883.6" width="1.5" height="72.6" fill="#1c3e32"/>
<rect x="204.69" y="883.6" width="2" height="72.6" fill="#2a9a66"/>
<rect x="240.08" y="883.6" width="1.5" height="72.6" fill="#1c3e32"/>
<rect x="274.98" y="883.6" width="2" height="72.6" fill="#2a9a66"/>
<rect x="310.37" y="883.6" width="1.5" height="72.6" fill="#1c3e32"/>
<rect x="345.26" y="883.6" width="2" height="72.6" fill="#2a9a66"/>
<rect x="380.66" y="883.6" width="1.5" height="72.6" fill="#1c3e32"/>
<rect x="450.94" y="883.6" width="1.5" height="72.6" fill="#1c3e32"/>
<rect x="485.84" y="883.6" width="2" height="72.6" fill="#2a9a66"/>
<rect x="521.23" y="883.6" width="1.5" height="72.6" fill="#1c3e32"/>
<rect x="556.12" y="883.6" width="2" height="72.6" fill="#2a9a66"/>
<rect x="591.52" y="883.6" width="1.5" height="72.6" fill="#1c3e32"/>
<rect x="626.41" y="883.6" width="2" height="72.6" fill="#2a9a66"/>
<rect x="661.81" y="883.6" width="1.5" height="72.6" fill="#1c3e32"/>
<rect x="732.09" y="883.6" width="1.5" height="72.6" fill="#1c3e32"/>
<rect x="766.99" y="883.6" width="2" height="72.6" fill="#2a9a66"/>
<rect x="802.38" y="883.6" width="1.5" height="72.6" fill="#1c3e32"/>
<rect x="837.27" y="883.6" width="2" height="72.6" fill="#2a9a66"/>
<rect x="872.67" y="883.6" width="1.5" height="72.6" fill="#1c3e32"/>
<rect x="907.56" y="883.6" width="2" height="72.6" fill="#2a9a66"/>
<rect x="942.96" y="883.6" width="1.5" height="72.6" fill="#1c3e32"/>
<rect x="1013.24" y="883.6" width="1.5" height="72.6" fill="#1c3e32"/>
<rect x="1048.14" y="883.6" width="2" height="72.6" fill="#2a9a66"/>
<rect x="1083.53" y="883.6" width="1.5" height="72.6" fill="#1c3e32"/>
<rect x="1118.42" y="883.6" width="2" height="72.6" fill="#2a9a66"/>
<rect x="1153.82" y="883.6" width="1.5" height="72.6" fill="#1c3e32"/>
<rect x="1188.71" y="883.6" width="2" height="72.6" fill="#2a9a66"/>
<rect x="1224.11" y="883.6" width="1.5" height="72.6" fill="#1c3e32"/>
<rect x="135.40" y="892.7" width="140.58" height="54.3" fill="#2e6b3a"/>
<rect x="135.40" y="892.7" width="3.4" height="54.3" fill="#5ae37a"/>
<polygon points="260.48,947 275.98,931.5 275.98,947" fill="#5ae37a"/>
<rect x="416.55" y="892.7" width="140.58" height="54.3" fill="#2e6b3a"/>
<rect x="416.55" y="892.7" width="3.4" height="54.3" fill="#5ae37a"/>
<polygon points="541.62,947 557.12,931.5 557.12,947" fill="#5ae37a"/>
<rect x="557.12" y="892.7" width="70.29" height="54.3" fill="#2e6b3a"/>
<rect x="557.12" y="892.7" width="3.4" height="54.3" fill="#5ae37a"/>
<polygon points="611.91,947 627.41,931.5 627.41,947" fill="#5ae37a"/>
<rect x="697.70" y="892.7" width="140.58" height="54.3" fill="#2e6b3a"/>
<rect x="697.70" y="892.7" width="3.4" height="54.3" fill="#5ae37a"/>
<polygon points="822.77,947 838.27,931.5 838.27,947" fill="#5ae37a"/>
<rect x="978.85" y="892.7" width="140.58" height="54.3" fill="#2e6b3a"/>
<rect x="978.85" y="892.7" width="3.4" height="54.3" fill="#5ae37a"/>
<polygon points="1103.92,947 1119.42,931.5 1119.42,947" fill="#5ae37a"/>
<rect x="135.4" y="882" width="1124.6" height="1.8" fill="#4fd77a"/>
<rect x="135.4" y="956" width="1124.6" height="1.8" fill="#4fd77a"/>
<rect x="134.50" y="876" width="1.8" height="86" fill="#4fd77a"/>
<rect x="415.65" y="876" width="1.8" height="86" fill="#4fd77a"/>
<rect x="696.80" y="876" width="1.8" height="86" fill="#4fd77a"/>
<rect x="977.95" y="876" width="1.8" height="86" fill="#4fd77a"/>
<rect x="1259.10" y="876" width="1.8" height="86" fill="#4fd77a"/>
<rect x="791" y="880" width="2.2" height="76" fill="#f7e23a"/>
<polygon points="785.3,873.9 799.1,873.9 792.1,884" fill="#f7e23a"/>
<circle cx="90.6" cy="917.8" r="19.5" fill="#0c2a2a"/>
<path d="M81.5 914.2 H85.3 L90.7 908.7 V926.9 L85.3 921.4 H81.5 Z" fill="#3cf56a"/>
<path d="M93.4 912.6 A7 7 0 0 1 93.4 923" fill="none" stroke="#3cf56a" stroke-width="1.6"/>
<path d="M95.8 910.3 A10.5 10.5 0 0 1 95.8 925.3" fill="none" stroke="#3cf56a" stroke-width="1.6"/>
</g></svg>
<div class="t" style="left:63.5px;top:824.9px;font-size:19px;color:#555;font-weight:normal;letter-spacing:0.45px;">Snap/Length:</div>
<div class="t" style="left:512px;top:824.9px;font-size:19px;color:#555;font-weight:normal;letter-spacing:0.8px;">Bars:</div>
<div class="t" style="left:676px;top:824.9px;font-size:19px;color:#555;font-weight:normal;letter-spacing:0.3px;">View:</div>
<div class="t" style="left:1155px;top:824.9px;font-size:19px;color:#555;font-weight:normal;letter-spacing:0.6px;">Shuffle:</div>
<div class="t" style="left:218.5px;top:825.8px;font-size:21px;color:#2b6a2b;font-weight:bold;">Bar</div>
<div class="t" style="left:268.3px;top:825.8px;font-size:21px;color:#2b6a2b;font-weight:bold;">1/2</div>
<div class="t" style="left:315.4px;top:825.8px;font-size:21px;color:#2b6a2b;font-weight:bold;">1/4</div>
<div class="t" style="left:362.5px;top:825.8px;font-size:21px;color:#5ef55a;font-weight:bold;">1/8</div>
<div class="t" style="left:404px;top:825.8px;font-size:21px;color:#2b6a2b;font-weight:bold;">1/16</div>
<div class="t" style="left:600px;top:825.8px;font-size:21px;color:#5ef55a;font-weight:bold;">16</div>
<div class="t" style="left:1261.5px;top:825.8px;font-size:21px;color:#5ef55a;font-weight:bold;">63%</div>
<div class="t" style="left:747.5px;width:72.8px;text-align:center;top:825.6px;font-size:21px;font-weight:bold;color:#1d3a1d;letter-spacing:0.3px;">1-4</div>
<div class="t" style="left:831.7px;width:72.8px;text-align:center;top:825.6px;font-size:21px;font-weight:bold;color:#5ef55e;letter-spacing:0.3px;">5-8</div>
<div class="t" style="left:915.9px;width:72.8px;text-align:center;top:825.6px;font-size:21px;font-weight:bold;color:#5ef55e;letter-spacing:0.3px;">9-12</div>
<div class="t" style="left:1000.1px;width:72.8px;text-align:center;top:825.6px;font-size:21px;font-weight:bold;color:#5ef55e;letter-spacing:0.3px;">13-16</div>
<div class="t" style="left:142.70000000000002px;top:862.1px;font-size:15.5px;color:#5ae37a;font-weight:normal;">1</div>
<div class="t" style="left:423.84999999999997px;top:862.1px;font-size:15.5px;color:#5ae37a;font-weight:normal;">2</div>
<div class="t" style="left:704.9999999999999px;top:862.1px;font-size:15.5px;color:#5ae37a;font-weight:normal;">3</div>
<div class="t" style="left:986.1499999999999px;top:862.1px;font-size:15.5px;color:#5ae37a;font-weight:normal;">4</div>
<div class="t" style="left:142.4px;top:895.5px;font-size:21.5px;color:#5ae37a;font-weight:bold;">GMaj9</div>
<div class="t" style="left:423.54999999999995px;top:895.5px;font-size:21.5px;color:#5ae37a;font-weight:bold;">DMaj9</div>
<div class="t" style="left:564.125px;top:895.5px;font-size:21.5px;color:#5ae37a;font-weight:bold;">FMaj9</div>
<div class="t" style="left:704.6999999999999px;top:895.5px;font-size:21.5px;color:#5ae37a;font-weight:bold;">Am7</div>
<div class="t" style="left:985.8499999999999px;top:895.5px;font-size:21.5px;color:#5ae37a;font-weight:bold;">Bbdim7</div>
<div class="t" style="left:1276.5px;top:912.7px;font-size:15.7px;color:#4cf04c;font-weight:normal;">CLEAR</div>
</div></body></html>
